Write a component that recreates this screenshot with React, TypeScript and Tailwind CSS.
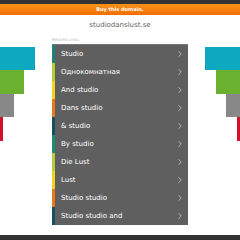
import { ChevronRight } from 'lucide-react'

const links = [
  { label: 'Studio', color: 'border-[#1b7f7c]' },
  { label: 'Однокомнатная', color: 'border-[#b6cc3c]' },
  { label: 'And studio', color: 'border-[#f2d21e]' },
  { label: 'Dans studio', color: 'border-[#e8791c]' },
  { label: '& studio', color: 'border-[#14506a]' },
  { label: 'By studio', color: 'border-[#1f8a72]' },
  { label: 'Die Lust', color: 'border-[#b6cc3c]' },
  { label: 'Lust', color: 'border-[#f2d21e]' },
  { label: 'Studio studio', color: 'border-[#e8791c]' },
  { label: 'Studio studio and', color: 'border-[#14506a]' },
]

export default function App() {
  return (
    <div className="w-[240px] h-[240px] bg-white flex flex-col overflow-hidden font-['DejaVu_Sans',sans-serif]">
      <div className="h-[4px] bg-[#333333]" />
      <div className="h-[11px] bg-gradient-to-b from-[#f7931a] to-[#f26d00] flex items-center justify-center">
        <span className="text-[5px] font-bold text-white leading-none">Buy this domain.</span>
      </div>
      <div className="h-[21px] flex items-center justify-center">
        <span className="text-[7px] text-[#666] leading-none">studiodanslust.se</span>
      </div>
      <div className="flex flex-1 pt-[2px]">
        <div className="w-[52px] pt-[9px] flex flex-col items-start">
          <div className="w-[35px] h-[23px] bg-[#0ea8bf]" />
          <div className="w-[24px] h-[24px] bg-[#6ab130]" />
          <div className="w-[14px] h-[23px] bg-[#888888]" />
          <div className="w-[3px] h-[24px] bg-[#d4112c]" />
        </div>
        <div className="w-[136px] flex flex-col">
          <div className="h-[6px] text-[4px] leading-none text-[#bbb]">Related Links</div>
          <div className="bg-[#5f5f5f] border-t border-[#777]">
            {links.map(l => (
              <div key={l.label} className={`h-[18px] flex items-center justify-between border-l-[3px] ${l.color} pl-[6px] pr-[3px]`}>
                <span className="text-[7px] text-white leading-none">{l.label}</span>
                <ChevronRight size={10} strokeWidth={1.25} className="text-white" />
              </div>
            ))}
          </div>
        </div>
        <div className="w-[52px] pt-[9px] flex flex-col items-end">
          <div className="w-[35px] h-[23px] bg-[#0ea8bf]" />
          <div className="w-[24px] h-[24px] bg-[#6ab130]" />
          <div className="w-[14px] h-[23px] bg-[#888888]" />
          <div className="w-[3px] h-[24px] bg-[#d4112c]" />
        </div>
      </div>
      <div className="h-[5px] bg-[#333333]" />
    </div>
  )
}
